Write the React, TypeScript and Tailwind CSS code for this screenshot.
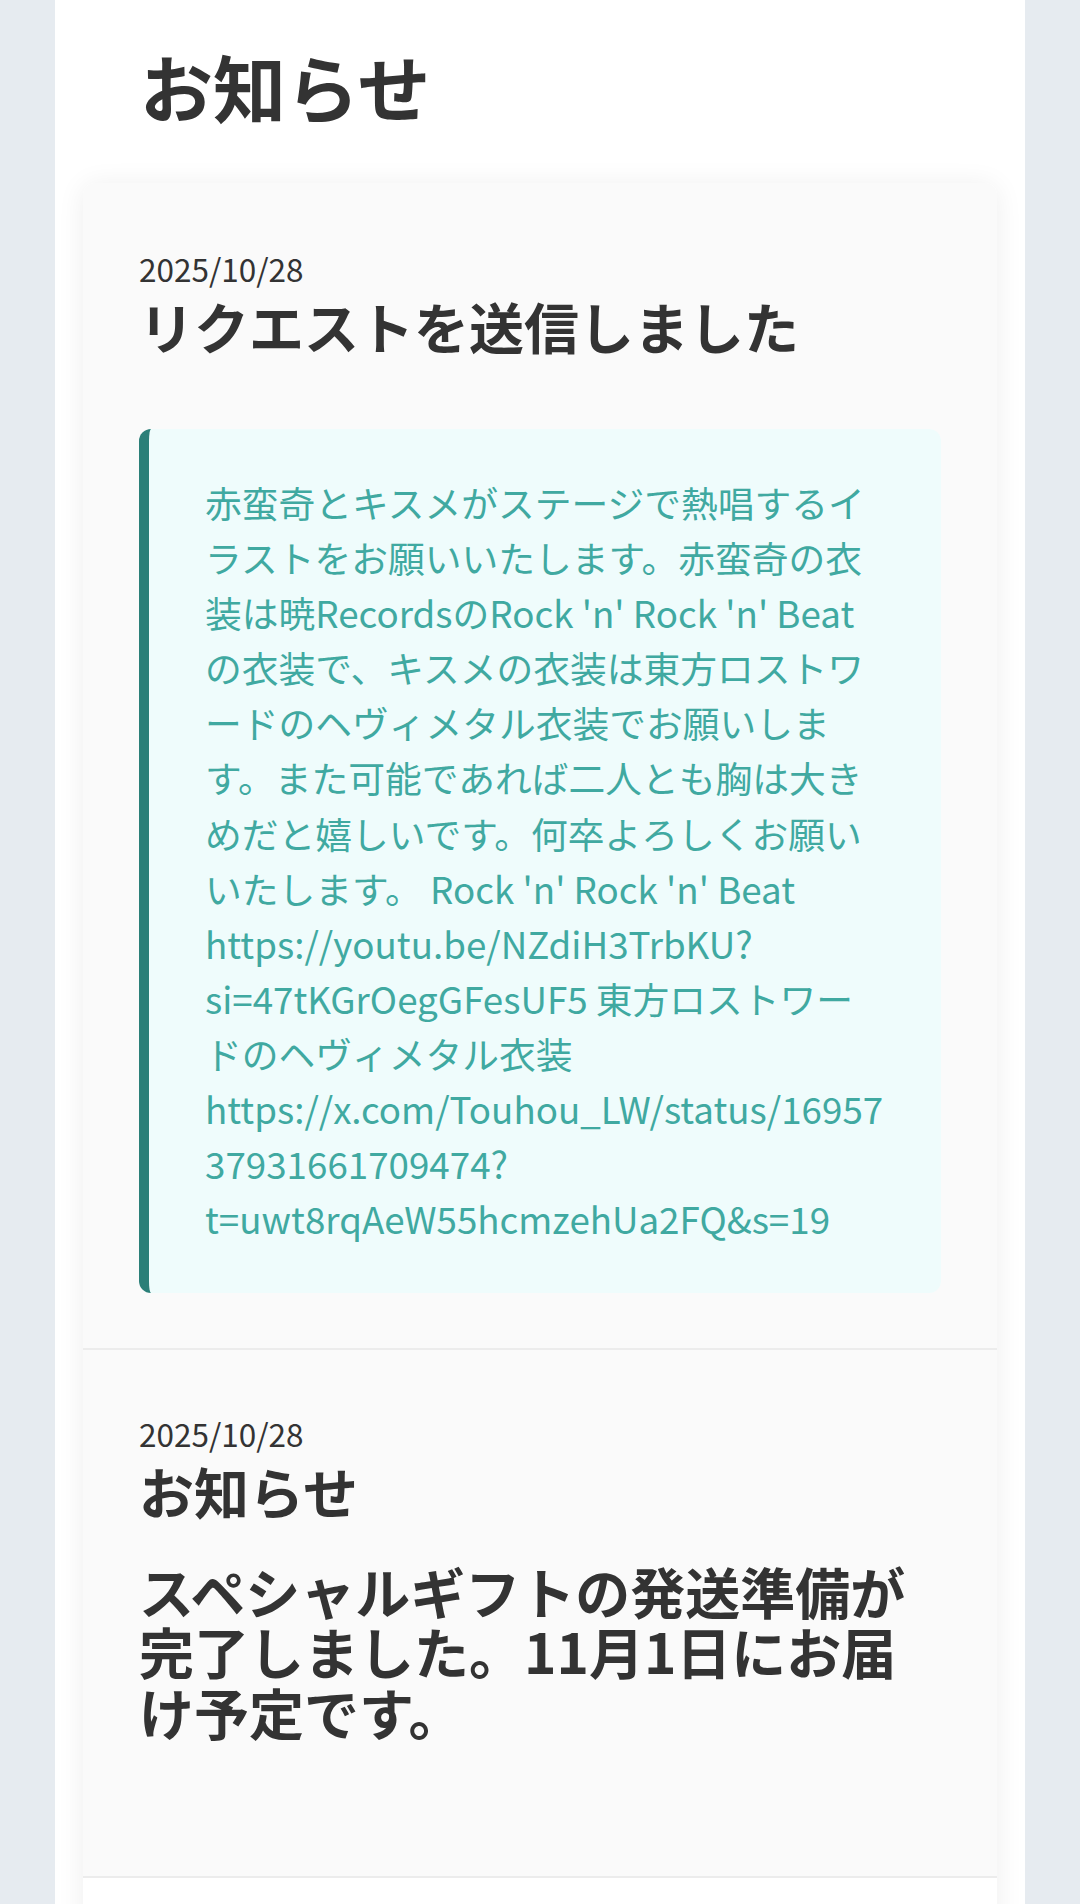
const REQUEST_TEXT =
  "赤蛮奇とキスメがステージで熱唱するイラストをお願いいたします。赤蛮奇の衣装は暁RecordsのRock 'n' Rock 'n' Beatの衣装で、キスメの衣装は東方ロストワードのヘヴィメタル衣装でお願いします。また可能であれば二人とも胸は大きめだと嬉しいです。何卒よろしくお願いいたします。 Rock 'n' Rock 'n' Beat https://youtu.be/NZdiH3TrbKU?si=47tKGrOegGFesUF5 東方ロストワードのヘヴィメタル衣装 https://x.com/Touhou_LW/status/1695737931661709474?t=uwt8rqAeW55hcmzehUa2FQ&s=19";

export default function App() {
  return (
    <div className="min-h-screen bg-[#e6ebf0] font-['Noto_Sans_CJK_JP','Noto_Sans',sans-serif] text-[#333]">
      <div className="mx-auto min-h-screen w-[970px] bg-white pt-[42px]">
        <h1 className="pl-[85px] text-[73px] font-bold leading-[1.2]">お知らせ</h1>

        {/* notification list */}
        <div className="mx-[28px] mt-[53px] overflow-hidden rounded-[12px] shadow-[0_2px_28px_rgba(0,0,0,0.07)]">
          <div className="bg-[#fafafa] px-[56px] pt-[62px] pb-[55px]">
            <p className="text-[31.5px] leading-[1.5]">2025/10/28</p>
            <h2 className="text-[55px] font-bold leading-[1.2]">リクエストを送信しました</h2>
            <div className="mt-[71px] rounded-[12px] border-l-[10px] border-[#2b7f78] bg-[#effcfc] px-[56px] py-[46px]">
              <p className="break-words text-[36.75px] leading-[1.5] text-[#40a9a1]">{REQUEST_TEXT}</p>
            </div>
          </div>

          <div className="border-t-2 border-[#ececec] bg-[#fafafa] px-[56px] pt-[60px] pb-[135px]">
            <p className="text-[31.5px] leading-[1.5]">2025/10/28</p>
            <h2 className="text-[55px] font-bold leading-[1.2]">お知らせ</h2>
            <p className="mt-[37px] text-[55px] font-bold leading-[1.1]">
              スペシャルギフトの発送準備が完了しました。11月1日にお届け予定です。
            </p>
          </div>

          <div className="h-[160px] border-t-2 border-[#ececec] bg-white"></div>
        </div>
      </div>
    </div>
  );
}
